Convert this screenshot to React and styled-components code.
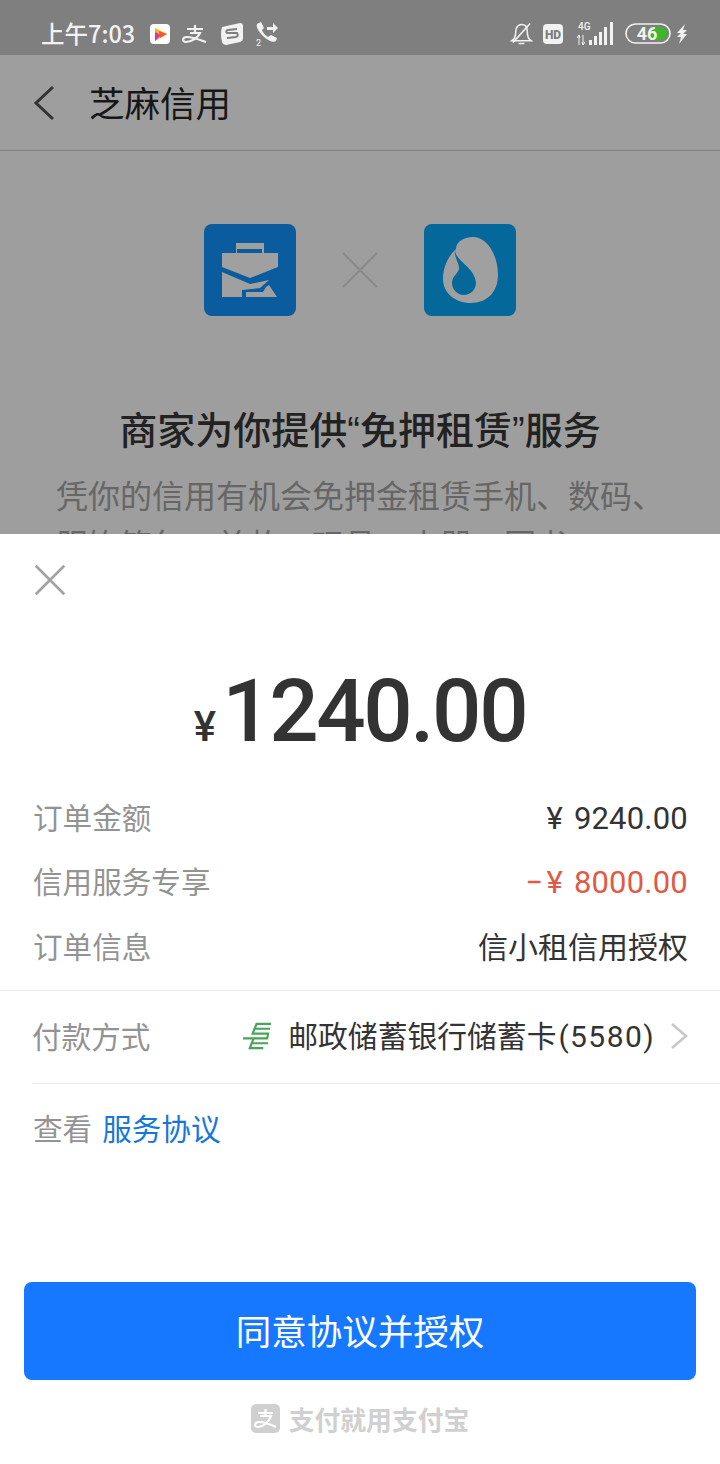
import React from "react";
import styled, { createGlobalStyle } from "styled-components";

const cjk = `"Noto Sans CJK SC", "Noto Sans", sans-serif`;

const GlobalStyle = createGlobalStyle`
  html, body {
    margin: 0;
    padding: 0;
    background: #fff;
    font-family: ${cjk};
  }
`;

const Page = styled.div`
  width: 720px;
  height: 1464px;
  overflow: hidden;
  display: flex;
  flex-direction: column;
`;

const Dimmed = styled.div`
  height: 534px;
  flex: none;
  overflow: hidden;
  background: #9e9e9e;
  display: flex;
  flex-direction: column;
`;

const StatusBar = styled.div`
  height: 55px;
  flex: none;
  box-sizing: border-box;
  background: #7f7f7f;
  display: flex;
  align-items: center;
  justify-content: space-between;
  padding: 12px 32px 0 41px;
  color: #f2f2f2;
`;

const StatusSide = styled.div`
  display: flex;
  align-items: center;
  gap: ${(p) => p.$gap || 12}px;
`;

const Clock = styled.span`
  font: 500 23.5px/1 ${cjk};
  margin-right: 3px;
`;

const NavBar = styled.div`
  height: 96px;
  flex: none;
  box-sizing: border-box;
  border-bottom: 1px solid #808080;
  display: flex;
  align-items: center;
  padding-left: 32px;
  gap: 33px;
`;

const NavTitle = styled.span`
  font: 400 35.5px/1 ${cjk};
  color: #171717;
  margin-top: -2px;
`;

const Logos = styled.div`
  display: flex;
  align-items: center;
  justify-content: center;
  gap: 45px;
  padding-top: 73px;
`;

const LogoTile = styled.div`
  width: 92px;
  height: 92px;
  border-radius: 8px;
  background: ${(p) => p.$color};
  display: flex;
  align-items: center;
  justify-content: center;
`;

const Headline = styled.h1`
  margin: 89px 0 0;
  text-align: center;
  font: 500 38px/52px "Liberation Sans", ${cjk};
  color: #222;
`;

const Blurb = styled.p`
  margin: 13px 0 0;
  padding: 0 32px 0 56px;
  font: 400 32px/49px ${cjk};
  color: #666;
`;

const Sheet = styled.div`
  flex: 1;
  background: #fff;
  display: flex;
  flex-direction: column;
`;

const CloseRow = styled.div`
  height: 92px;
  box-sizing: border-box;
  padding: 30px 0 0 34px;
`;

const Amount = styled.div`
  height: 159px;
  box-sizing: border-box;
  padding: 25px 0 0 0;
  display: flex;
  justify-content: center;
  align-items: baseline;
  color: #333;
  font-family: Roboto, sans-serif;
  font-weight: 500;
`;

const AmountSign = styled.span`
  font-size: 42px;
  margin-right: 6px;
`;

const AmountValue = styled.span`
  font-size: 87px;
  line-height: 120px;
  letter-spacing: -2.4px;
`;

const Details = styled.div`
  padding: 0 32px 13px 33px;
  border-bottom: 1px solid #e8e8e8;
`;

const Row = styled.div`
  height: 64px;
  display: flex;
  align-items: baseline;
  justify-content: space-between;
  line-height: 64px;
`;

const Label = styled.span`
  font: 400 29.6px/64px ${cjk};
  color: #939393;
`;

const Value = styled.span`
  font: 400 30px/64px ${cjk};
  color: #333;
`;

const Money = styled.span`
  font: 400 31px/64px Roboto, sans-serif;
  letter-spacing: 0.2px;
  word-spacing: 3px;
  color: ${(p) => p.$color || "#333"};
`;

const Minus = styled.span`
  margin-right: 3px;
`;

const PayRow = styled.div`
  margin-left: 32px;
  height: 93px;
  box-sizing: border-box;
  padding: 0 31px 2px 0;
  border-bottom: 1px solid #ececec;
  display: flex;
  align-items: center;
  justify-content: space-between;
`;

const PayMethod = styled.div`
  display: flex;
  align-items: center;
  gap: 16px;
`;

const BankName = styled.span`
  font: 400 29.8px/1 ${cjk};
  color: #333;
`;

const BankCode = styled.span`
  font: 400 30px/1 Roboto, sans-serif;
  letter-spacing: 1.4px;
  margin-left: 2px;
`;

const AgreementRow = styled.div`
  height: 92px;
  box-sizing: border-box;
  padding: 0 0 4px 33px;
  display: flex;
  align-items: center;
  gap: 10px;
`;

const AgreementLink = styled.a`
  font: 400 29.6px/64px ${cjk};
  color: #1677d9;
`;

const PrimaryButton = styled.button`
  display: block;
  margin: 106px 24px 0;
  height: 98px;
  border: none;
  border-radius: 8px;
  background: #1677ff;
  color: #fff;
  font: 400 35.5px/1 ${cjk};
  padding-bottom: 4px;
`;

const Footer = styled.div`
  margin-top: 24px;
  display: flex;
  justify-content: center;
  align-items: center;
  gap: 9px;
  color: #d0d0d0;
`;

const FooterText = styled.span`
  font: 700 25.8px/1 ${cjk};
`;

const BoltSvg = styled.svg`
  margin-left: -5px;
`;

const BackIcon = () => (
  <svg width="24" height="36" viewBox="0 0 24 36" fill="none" stroke="#333" strokeWidth="3">
    <path d="M21 2 L4 18 L21 34" />
  </svg>
);

const Cross = ({ size, color, width }) => (
  <svg width={size} height={size} viewBox="0 0 36 36" stroke={color} strokeWidth={width}>
    <path d="M2 2 L34 34 M34 2 L2 34" />
  </svg>
);

const PlayIcon = () => (
  <svg width="20" height="20" viewBox="0 0 20 20">
    <rect width="20" height="20" rx="4" fill="#fff" />
    <path d="M5 4 L17 10 L5 17 Z" fill="#f5b81f" />
    <path d="M5 8 L11 11 L5 17 Z" fill="#d934b5" />
    <path d="M9 7 L17 10 L10 14 Z" fill="#f0592a" />
  </svg>
);

const AlipayGlyph = () => (
  <svg width="26" height="20" viewBox="0 0 26 20" fill="none" stroke="#f2f2f2" strokeWidth="2.2">
    <path d="M5 5 H21 M13 1 V9 M8 9 H18 C16 14 9 18 4 18 C0 18 0 13 5 13 C11 13 18 16 24 18" />
  </svg>
);

const SogouGlyph = () => (
  <svg width="24" height="24" viewBox="0 0 24 24">
    <path d="M2 5 L20 1 Q23 1 23 4 L23 17 Q23 19 20 20 L6 23 Q3 23 2 20 Q0 12 2 5 Z" fill="#f2f2f2" />
    <path d="M17 7 L8 8 Q5 9 7 11 L17 11 Q19 14 16 15 L7 16" fill="none" stroke="#7f7f7f" strokeWidth="2" />
  </svg>
);

const CallGlyph = () => (
  <svg width="23" height="26" viewBox="0 0 23 26">
    <path d="M1 3 L5 1 L8 7 L6 9 C7 12 9 14 12 16 L15 14 L21 17 L20 20 C18 22 12 20 7 15 C2 10 0 6 1 3 Z" fill="#f2f2f2" />
    <path d="M11 6 H17 V2 L22 7 L17 12 V9 H11 Z" fill="#f2f2f2" />
    <text x="0" y="25" fontSize="9" fontFamily="Roboto" fill="#f2f2f2">2</text>
  </svg>
);

const MuteBell = () => (
  <svg width="23" height="26" viewBox="0 0 24 26" fill="none" stroke="#f2f2f2" strokeWidth="1.6">
    <path d="M2 20 C5 18 6 14 6 10 C6 6 9 3 12 3 C16 3 18 6 18 10 C18 14 19 18 22 20 Z" />
    <path d="M9 23 H15 M3 22 L21 2" />
  </svg>
);

const HdBadge = () => (
  <svg width="20" height="20" viewBox="0 0 20 20">
    <rect width="20" height="20" rx="4" fill="#f2f2f2" />
    <text x="10" y="14.5" textAnchor="middle" fontSize="12" fontWeight="900" fontFamily="Roboto" fill="#7f7f7f">HD</text>
  </svg>
);

const Signal = () => (
  <svg width="42" height="26" viewBox="-4 0 42 26" fill="#f2f2f2">
    <text x="1" y="9" fontSize="10" fontWeight="500" fontFamily="Roboto">4G</text>
    <path d="M2 14 V24 M0 17 L2 14 L3 17 M6 14 V24 M5 21 L6 24 L8 21" stroke="#f2f2f2" strokeWidth="1" fill="none" />
    <rect x="12" y="19" width="3" height="5" />
    <rect x="17" y="15" width="3" height="9" />
    <rect x="22" y="11" width="3" height="13" />
    <rect x="27" y="6" width="3" height="18" />
    <rect x="33" y="1" width="3" height="23" />
  </svg>
);

const Battery = () => (
  <svg width="46" height="21" viewBox="0 0 46 21">
    <rect x="1" y="1" width="44" height="19" rx="9.5" fill="none" stroke="#f2f2f2" strokeWidth="1.6" />
    <path d="M24 4 H36 A6.5 6.5 0 0 1 36 17 H24 Z" fill="#3db52e" />
    <text x="22" y="17" textAnchor="middle" fontSize="18" fontWeight="700" fontFamily="Roboto" fill="#f2f2f2">46</text>
  </svg>
);

const Bolt = () => (
  <BoltSvg width="12" height="20" viewBox="0 0 12 20" fill="#f2f2f2">
    <path d="M9 0 L1 9 H5 L1 13 H5 L3 20 L11 10 H7 L11 6 H7 Z" />
  </BoltSvg>
);

const BriefcaseLogo = () => (
  <svg width="56" height="55" viewBox="0 0 56 55" fill="#a0a0a0">
    <path fillRule="evenodd" d="M14 0 H42 V10 H56 V24 L28 35 L0 24 V10 H14 Z M15 6 V10 H40 V6 Z" />
    <path d="M0 29 L28 41 L47 37 L38 45 L20 47 V54 H0 Z" />
    <path d="M24 49 H41 L44 44 L47 42 L55 54 H24 Z" />
  </svg>
);

const SesameLogo = ({ tile }) => (
  <svg width="55" height="66" viewBox="0 0 55 66">
    <path
      fill="#a0a0a0"
      d="M13 12 C13 4 22 0 30 0 C44 0 55 18 55 38 C55 55 44 66 28 66 C12 66 0 56 0 42 C0 30 5 20 12 13 Z"
    />
    <path
      fill={tile}
      d="M12 13 C12 24 32 30 33 46 C33 53 27 58 21 58 C14 58 9 52 9 46 C9 38 17 36 16 30 C15 24 11 20 12 13 Z"
    />
  </svg>
);

const PostalBankIcon = () => (
  <svg width="29" height="29" viewBox="0 0 30 30" fill="none" stroke="#4aa35a" strokeWidth="2.2">
    <path d="M29 2 H14 L12 7 H28 M12 7 L10 12 H26 L25 17 H0 M11 17 L9 22 H26 M9 22 L7 27 H21" />
  </svg>
);

const Chevron = () => (
  <svg width="18" height="28" viewBox="0 0 18 28" fill="none" stroke="#c8c8c8" strokeWidth="2.6">
    <path d="M1 2 L15 14 L1 26" />
  </svg>
);

const AlipayBadge = () => (
  <svg width="29" height="29" viewBox="0 0 29 29">
    <rect width="29" height="29" rx="5" fill="#d0d0d0" />
    <path d="M7 9 H22 M14.5 5 V12 M9 12 H20 C18 18 12 23 7 23 C3 23 3 18 8 18 C13 18 19 20 25 23" fill="none" stroke="#fff" strokeWidth="2.2" />
  </svg>
);

export default function App() {
  return (
    <Page>
      <GlobalStyle />
      <Dimmed>
        <StatusBar>
          <StatusSide>
            <Clock>上午7:03</Clock>
            <PlayIcon />
            <AlipayGlyph />
            <SogouGlyph />
            <CallGlyph />
          </StatusSide>
          <StatusSide $gap={10}>
            <MuteBell />
            <HdBadge />
            <Signal />
            <Battery />
            <Bolt />
          </StatusSide>
        </StatusBar>
        <NavBar>
          <BackIcon />
          <NavTitle>芝麻信用</NavTitle>
        </NavBar>
        <Logos>
          <LogoTile $color="#0a5c9e"><BriefcaseLogo /></LogoTile>
          <Cross size={38} color="#8a8a8a" width={2} />
          <LogoTile $color="#04689a"><SesameLogo tile="#04689a" /></LogoTile>
        </Logos>
        <Headline>商家为你提供“免押租赁”服务</Headline>
        <Blurb>凭你的信用有机会免押金租赁手机、数码、服饰箱包、美妆、玩具、电器、图书</Blurb>
      </Dimmed>
      <Sheet>
        <CloseRow>
          <Cross size={32} color="#a3a3a3" width={3} />
        </CloseRow>
        <Amount>
          <AmountSign>¥</AmountSign>
          <AmountValue>1240.00</AmountValue>
        </Amount>
        <Details>
          <Row><Label>订单金额</Label><Money>¥ 9240.00</Money></Row>
          <Row><Label>信用服务专享</Label><Money $color="#e05a47"><Minus>−</Minus>¥ 8000.00</Money></Row>
          <Row><Label>订单信息</Label><Value>信小租信用授权</Value></Row>
        </Details>
        <PayRow>
          <Label>付款方式</Label>
          <PayMethod>
            <PostalBankIcon />
            <BankName>邮政储蓄银行储蓄卡<BankCode>(5580)</BankCode></BankName>
            <Chevron />
          </PayMethod>
        </PayRow>
        <AgreementRow>
          <Label>查看</Label>
          <AgreementLink>服务协议</AgreementLink>
        </AgreementRow>
        <PrimaryButton>同意协议并授权</PrimaryButton>
        <Footer>
          <AlipayBadge />
          <FooterText>支付就用支付宝</FooterText>
        </Footer>
      </Sheet>
    </Page>
  );
}
